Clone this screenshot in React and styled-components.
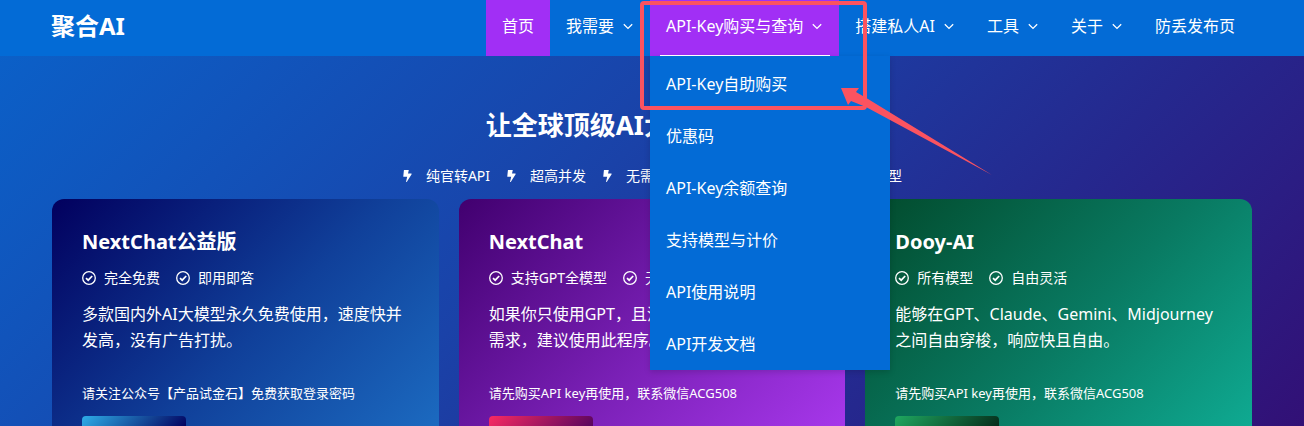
import React from "react";
import styled, { createGlobalStyle } from "styled-components";

const Global = createGlobalStyle`
  *, *::before, *::after { box-sizing: border-box; }
  body {
    margin: 0;
    color: #fff;
    font-family: "Noto Sans", "Noto Sans CJK SC", sans-serif;
    font-size: 16px;
    line-height: 26px;
  }
  h1, h2, p, ul { margin: 0; padding: 0; }
  ul { list-style: none; }
  a { color: inherit; text-decoration: none; }
`;

const Page = styled.div`
  position: relative;
  height: 100vh;
  overflow: hidden;
  background: linear-gradient(135deg, #0a62ca 0%, #1a42a8 45%, #26268c 75%, #321076 100%);
`;

const Container = styled.div`
  max-width: 1200px;
  margin: 0 auto;
`;

const Header = styled.header`
  position: relative;
  z-index: 2;
  padding-right: 2px;
  background: #036bd6;
`;

const HeaderRow = styled(Container)`
  display: flex;
  justify-content: space-between;
  height: 56px;
`;

const Brand = styled.a`
  font-size: 24px;
  font-weight: 700;
  line-height: 52px;
`;

const NavList = styled.ul`
  display: flex;
  height: 56px;
`;

const NavItem = styled.li`
  position: relative;
  background: ${(p) => (p.$active ? "#a12ff5" : "transparent")};
  ${(p) =>
    p.$open &&
    `&::after {
      content: "";
      position: absolute;
      left: 5%;
      right: 5%;
      bottom: 0;
      height: 1px;
      background: #fff;
    }`}
`;

const NavLink = styled.a`
  display: flex;
  align-items: center;
  gap: 8px;
  height: 100%;
  padding: 0 16px 4px;
  white-space: nowrap;
`;

const Menu = styled.ul`
  position: absolute;
  top: 56px;
  left: 0;
  width: 240px;
  padding-top: 2px;
  background: #036bd6;
  box-shadow: 0 2px 6px rgba(0, 0, 0, 0.15);
`;

const MenuLink = styled.a`
  display: block;
  padding: 13px 16px;
`;

const Hero = styled(Container)`
  display: flex;
  flex-direction: column;
  align-items: center;
  padding: 48px 0 10px;
`;

const HeroTitle = styled.h1`
  font-size: 26px;
  font-weight: 700;
  line-height: 43px;
`;

const HeroPoints = styled.ul`
  display: flex;
  gap: 16px;
  margin-top: 16px;
  font-size: 14px;
`;

const Point = styled.li`
  display: flex;
  align-items: center;
  gap: ${(p) => p.$gap || 8}px;
`;

const Cards = styled(Container)`
  display: grid;
  grid-template-columns: repeat(3, 1fr);
  gap: 20px;
`;

const Card = styled.article`
  padding: 30px;
  border-radius: 12px;
  background: ${(p) => p.$fill};
`;

const CardTitle = styled.h2`
  font-size: 20px;
  font-weight: 700;
`;

const CardPoints = styled.ul`
  display: flex;
  gap: 16px;
  margin-top: 10px;
  font-size: 14px;
`;

const CardText = styled.p`
  margin-top: 10px;
`;

const CardNote = styled.p`
  margin-top: 27px;
  font-size: 13px;
`;

const CardButton = styled.button`
  display: block;
  width: 104px;
  height: 40px;
  margin-top: 10px;
  border: 0;
  border-radius: 4px;
  background: ${(p) => p.$fill};
`;

const Annotation = styled.svg`
  position: absolute;
  z-index: 3;
  top: 0;
  left: 50%;
  margin-left: -12px;
`;

const Chevron = () => (
  <svg width="12" height="12" viewBox="0 0 12 12" fill="none" stroke="currentColor" strokeWidth="1.3" aria-hidden="true">
    <path d="M1.8 4.2 6 8.4l4.2-4.2" />
  </svg>
);

const Bolt = () => (
  <svg width="10" height="14" viewBox="0 0 10 14" fill="currentColor" aria-hidden="true">
    <path d="M2.2 1h4.6L6 4.4h3.2a.5.5 0 0 1 .4.8L4.9 12.8a.4.4 0 0 1-.8-.3L5.2 7.800H1.800a.5.5 0 0 1-.5-.6L1.900 1.300A.4.4 0 0 1 2.200 1z" />
  </svg>
);

const Check = () => (
  <svg width="14" height="14" viewBox="0 0 14 14" fill="none" stroke="currentColor" aria-hidden="true">
    <circle cx="7" cy="7" r="6.3" strokeWidth="1.3" />
    <path d="M4 7.2 6.2 9.2 10.2 5" strokeWidth="1.7" />
  </svg>
);

const menu = ["API-Key自助购买", "优惠码", "API-Key余额查询", "支持模型与计价", "API使用说明", "API开发文档"];

const nav = [
  { label: "首页", active: true },
  { label: "我需要", arrow: true },
  { label: "API-Key购买与查询", arrow: true, active: true, menu },
  { label: "搭建私人AI", arrow: true },
  { label: "工具", arrow: true },
  { label: "关于", arrow: true },
  { label: "防丢发布页" },
];

const heroPoints = ["纯官转API", "超高并发", "无需魔法", "稳定可靠", "支持全部模型"];

const cards = [
  {
    title: "NextChat公益版",
    points: ["完全免费", "即用即答"],
    text: "多款国内外AI大模型永久免费使用，速度快并发高，没有广告打扰。",
    note: "请关注公众号【产品试金石】免费获取登录密码",
    fill: "linear-gradient(135deg, #02005e 0%, #10409a 50%, #1e73c8 100%)",
    button: "linear-gradient(135deg, #2eaee8 0%, #02005e 80%)",
  },
  {
    title: "NextChat",
    points: ["支持GPT全模型", "无需登录"],
    text: "如果你只使用GPT，且没有画图、视频等其他需求，建议使用此程序。",
    note: "请先购买API key再使用，联系微信ACG508",
    fill: "linear-gradient(135deg, #41006f 0%, #7a20b6 50%, #b03cf6 100%)",
    button: "linear-gradient(135deg, #f92a62 0%, #41005e 90%)",
  },
  {
    title: "Dooy-AI",
    points: ["所有模型", "自由灵活"],
    text: "能够在GPT、Claude、Gemini、Midjourney之间自由穿梭，响应快且自由。",
    note: "请先购买API key再使用，联系微信ACG508",
    fill: "linear-gradient(135deg, #024a2c 0%, #097a62 50%, #10b49c 100%)",
    button: "linear-gradient(135deg, #1fa860 0%, #021c12 90%)",
  },
];

export default function App() {
  return (
    <Page>
      <Global />
      <Header>
        <HeaderRow>
          <Brand href="#">聚合AI</Brand>
          <nav>
            <NavList>
              {nav.map((n) => (
                <NavItem key={n.label} $active={n.active} $open={!!n.menu}>
                  <NavLink href="#">
                    {n.label}
                    {n.arrow && <Chevron />}
                  </NavLink>
                  {n.menu && (
                    <Menu>
                      {n.menu.map((m) => (
                        <li key={m}>
                          <MenuLink href="#">{m}</MenuLink>
                        </li>
                      ))}
                    </Menu>
                  )}
                </NavItem>
              ))}
            </NavList>
          </nav>
        </HeaderRow>
      </Header>
      <main>
        <Hero>
          <HeroTitle>让全球顶级AI大模型尽在API</HeroTitle>
          <HeroPoints>
            {heroPoints.map((t) => (
              <Point key={t} $gap={14}>
                <Bolt />
                {t}
              </Point>
            ))}
          </HeroPoints>
        </Hero>
        <Cards>
          {cards.map((c) => (
            <Card key={c.title} $fill={c.fill}>
              <CardTitle>{c.title}</CardTitle>
              <CardPoints>
                {c.points.map((t) => (
                  <Point key={t}>
                    <Check />
                    {t}
                  </Point>
                ))}
              </CardPoints>
              <CardText>{c.text}</CardText>
              <CardNote>{c.note}</CardNote>
              <CardButton type="button" aria-label={c.title} $fill={c.button} />
            </Card>
          ))}
        </Cards>
      </main>
      <Annotation width="360" height="180" viewBox="0 0 360 180" aria-hidden="true">
        <rect x="2" y="3" width="223" height="105" rx="2" fill="none" stroke="#fb5360" strokeWidth="4" />
        <path d="M201 88H219L216 92 228 99 352 175 226 107 211 101 208 105Z" fill="#fb5360" />
      </Annotation>
    </Page>
  );
}
